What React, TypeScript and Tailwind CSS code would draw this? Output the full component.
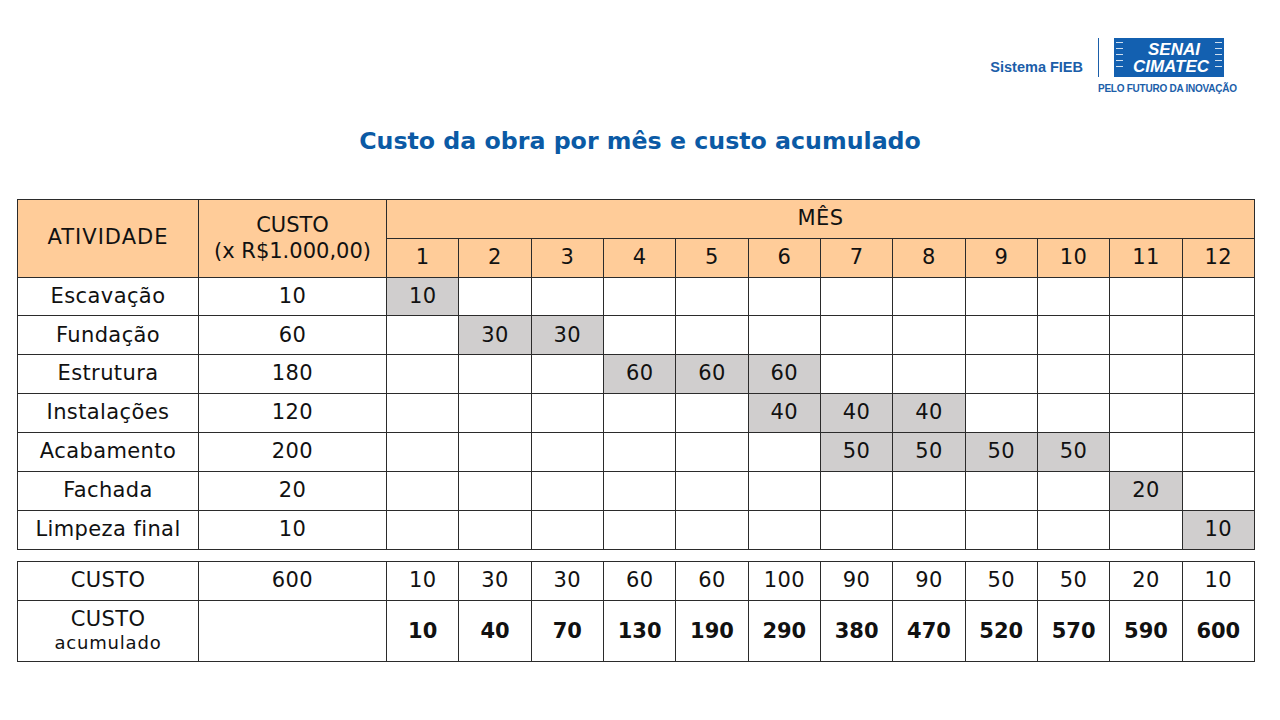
const FONT = { fontFamily: '"DejaVu Sans", "Open Sans", sans-serif' };
const LOGO_FONT = { fontFamily: '"Liberation Sans", Arial, sans-serif' };

type Activity = {
  name: string;
  cost: number;
  months: Record<number, number>;
};

const activities: Activity[] = [
  { name: "Escavação", cost: 10, months: { 1: 10 } },
  { name: "Fundação", cost: 60, months: { 2: 30, 3: 30 } },
  { name: "Estrutura", cost: 180, months: { 4: 60, 5: 60, 6: 60 } },
  { name: "Instalações", cost: 120, months: { 6: 40, 7: 40, 8: 40 } },
  { name: "Acabamento", cost: 200, months: { 7: 50, 8: 50, 9: 50, 10: 50 } },
  { name: "Fachada", cost: 20, months: { 11: 20 } },
  { name: "Limpeza final", cost: 10, months: { 12: 10 } },
];

const monthNumbers = [1, 2, 3, 4, 5, 6, 7, 8, 9, 10, 11, 12];
const monthlyCost = [10, 30, 30, 60, 60, 100, 90, 90, 50, 50, 20, 10];
const accumulated = [10, 40, 70, 130, 190, 290, 380, 470, 520, 570, 590, 600];

const cell = "border border-[#2b2b2b] text-center align-middle p-0";

function Columns() {
  return (
    <colgroup>
      <col className="w-[181px]" />
      <col className="w-[188px]" />
      {monthNumbers.map((month) => (
        <col key={month} className="w-[72.33px]" />
      ))}
    </colgroup>
  );
}

function TickMarks({ side }: { side: "left" | "right" }) {
  return (
    <div
      className={`absolute top-[4px] flex flex-col gap-[5px] ${
        side === "left" ? "left-[2px]" : "right-[2px]"
      }`}
    >
      {[0, 1, 2, 3, 4].map((i) => (
        <div key={i} className="h-px w-[7px] bg-white/80" />
      ))}
    </div>
  );
}

function Logo() {
  return (
    <div className="flex items-start" style={LOGO_FONT}>
      <div className="mt-[19px] mr-[15px] text-[14.5px] font-bold text-[#1b5ea9]">
        Sistema FIEB
      </div>
      <div className="flex w-[139px] flex-col items-start">
        <div className="flex items-start">
          <div className="mr-[15px] h-[39px] w-px bg-[#1b5ea9]" />
          <div className="relative flex h-[39px] w-[110px] flex-col items-center justify-center bg-[#1360b0] text-[17px] font-bold italic leading-[17px] text-white">
            <span className="pl-[10px]">SENAI</span>
            <span className="pl-[4px]">CIMATEC</span>
            <TickMarks side="left" />
            <TickMarks side="right" />
          </div>
        </div>
        <div className="mt-[4px] whitespace-nowrap text-[10px] font-bold tracking-[-0.25px] text-[#1b5ea9]">
          PELO FUTURO DA INOVAÇÃO
        </div>
      </div>
    </div>
  );
}

function ScheduleTable() {
  return (
    <table className="w-[1238px] table-fixed border-collapse text-[21px] tracking-[0.4px] text-[#111]">
      <Columns />
      <thead>
        <tr className="h-[39px] bg-[#ffcc99]">
          <th rowSpan={2} className={`${cell} font-normal tracking-[1px]`}>
            ATIVIDADE
          </th>
          <th rowSpan={2} className={`${cell} font-normal leading-[26px] tracking-[0px]`}>
            CUSTO
            <br />
            (x R$1.000,00)
          </th>
          <th colSpan={12} className={`${cell} font-normal`}>
            MÊS
          </th>
        </tr>
        <tr className="h-[39px] bg-[#ffcc99]">
          {monthNumbers.map((month) => (
            <th key={month} className={`${cell} font-normal`}>
              {month}
            </th>
          ))}
        </tr>
      </thead>
      <tbody>
        {activities.map((activity) => (
          <tr key={activity.name} className="h-[38.86px]">
            <td className={cell}>{activity.name}</td>
            <td className={cell}>{activity.cost}</td>
            {monthNumbers.map((month) => {
              const value = activity.months[month];
              return (
                <td
                  key={month}
                  className={`${cell} ${value ? "bg-[#d0cece]" : "bg-white"}`}
                >
                  {value ?? ""}
                </td>
              );
            })}
          </tr>
        ))}
      </tbody>
    </table>
  );
}

function TotalsTable() {
  return (
    <table className="mt-[11px] w-[1238px] table-fixed border-collapse text-[21px] tracking-[0.4px] text-[#111]">
      <Columns />
      <tbody>
        <tr className="h-[39px]">
          <td className={cell}>CUSTO</td>
          <td className={cell}>600</td>
          {monthlyCost.map((value, index) => (
            <td key={index} className={cell}>
              {value}
            </td>
          ))}
        </tr>
        <tr className="h-[61px]">
          <td className={`${cell} leading-[23px]`}>
            CUSTO
            <br />
            <span className="text-[18px] tracking-[0.8px]">acumulado</span>
          </td>
          <td className={cell} />
          {accumulated.map((value, index) => (
            <td key={index} className={`${cell} pt-[2px] font-bold tracking-[0px]`}>
              {value}
            </td>
          ))}
        </tr>
      </tbody>
    </table>
  );
}

export default function App() {
  return (
    <div className="h-[720px] w-[1280px] bg-white" style={FONT}>
      <div className="flex justify-end pr-[43px] pt-[38px]">
        <Logo />
      </div>
      <h1 className="mt-[28px] text-center text-[23.7px] font-bold text-[#0b5aa5]">
        Custo da obra por mês e custo acumulado
      </h1>
      <div className="ml-[17px] mt-[39px]">
        <ScheduleTable />
        <TotalsTable />
      </div>
    </div>
  );
}
